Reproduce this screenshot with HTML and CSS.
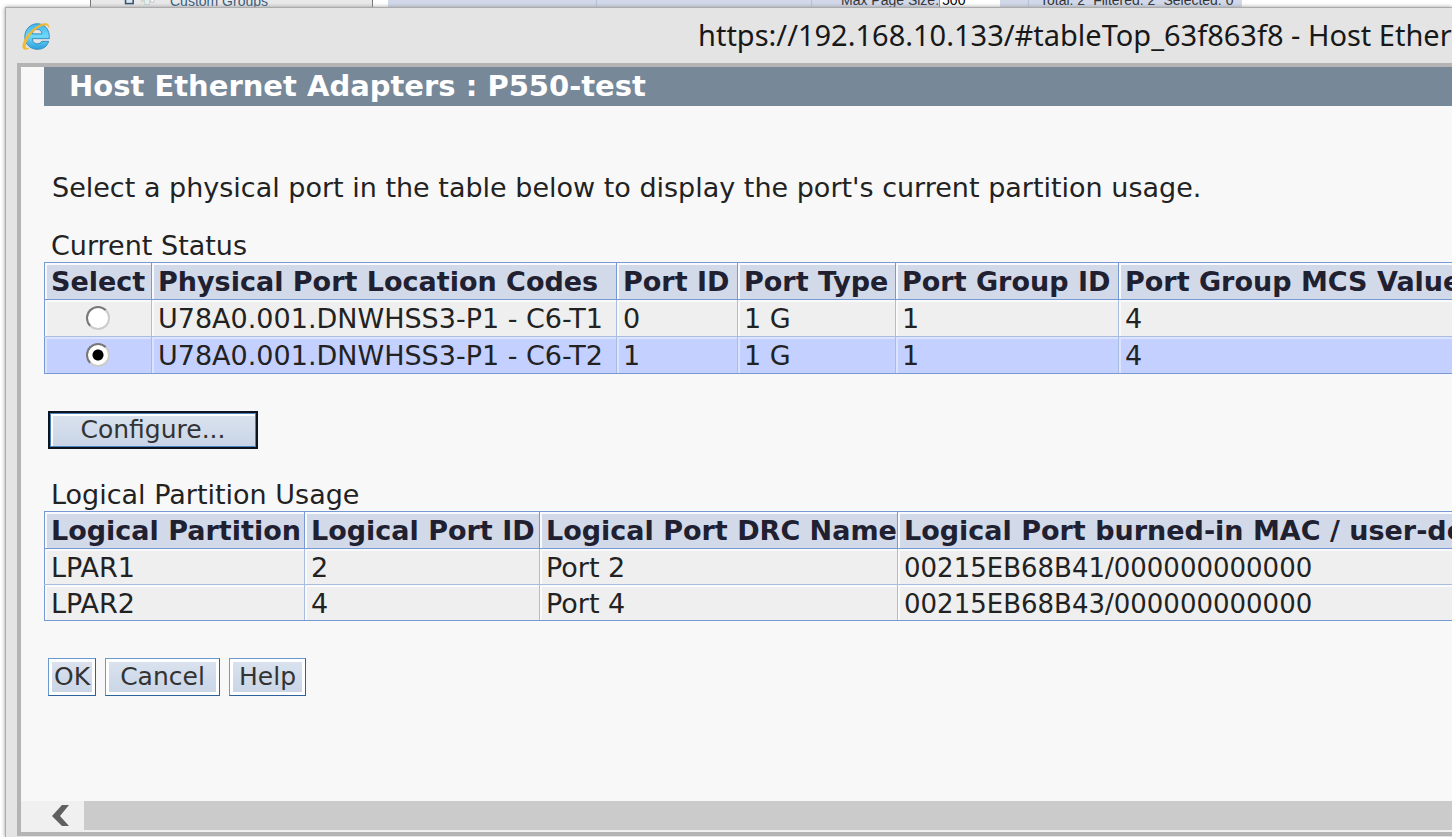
FILE: index.html
```
<!DOCTYPE html>
<html lang="en">
<head>
<meta charset="utf-8">
<title>Host Ethernet Adapters</title>
<link rel="stylesheet" href="styles.css">
</head>
<body>
<div class="backdrop">
  <div class="tree">
    <svg class="tree-icons" width="60" height="16" viewBox="0 0 60 16"><rect x="2" y="3" width="10" height="11" fill="#dce6f0" stroke="#33506e" stroke-width="2"/><rect x="22" y="4" width="4" height="8" fill="#d8d8c8"/><rect x="27" y="2" width="6" height="13" fill="#e6f2e6" stroke="#b8ccd8"/><rect x="35" y="4" width="4" height="8" fill="#fff" stroke="#b8b8c8"/></svg>
    <span>Custom Groups</span>
  </div>
  <div class="toolbar">
    <span class="tool-cell tool-first"></span>
    <span class="tool-cell tool-second"></span>
    <label class="tool-cell tool-size">Max Page Size: <input class="size-input" type="text" value="500"></label>
    <span class="tool-cell tool-totals"><span>Total: 2</span><span>Filtered: 2</span><span>Selected: 0</span></span>
  </div>
</div>
<div class="window">
  <header class="titlebar">
    <svg class="ie" width="32" height="32" viewBox="0 0 30 30">
      <defs><linearGradient id="b" x1="0" y1="0" x2="0" y2="1"><stop offset="0" stop-color="#45b4e8"/><stop offset=".5" stop-color="#6fd8fb"/><stop offset="1" stop-color="#2c9fda"/></linearGradient></defs>
      <path d="M27.500 17.500H11.500c.2 3 2 4.800 4.800 4.800 2 0 3.300-.8 4-2.300h6.600c-1.400 4.800-5.200 7.500-10.600 7.500C9.600 27.500 4.500 22.600 4.500 15.800 4.500 8.900 9.500 3.500 16.300 3.500c7.200 0 11.600 5.400 11.200 14zM11.600 13h9c-.2-2.700-1.900-4.300-4.400-4.300-2.600 0-4.200 1.600-4.600 4.300z" fill="url(#b)" stroke="#2786bb" stroke-width=".8"/>
      <path d="M27 7c.7-4-4-4.800-9.500-1.800C10 9.200 3.800 17 2.700 23.500c-.7 4.200 1.800 5 5.700 3.100C5.500 27 4.600 26 5.200 23 6.500 17 11.500 10.500 17.500 7 22.500 4 26.500 4 27 7z" fill="#f4b92c" stroke="#f4b92c" stroke-width=".6"/>
    </svg>
    <div class="address">https://192.168.10.133/#tableTop_63f863f8 - Host Ethernet Adapters</div>
  </header>
  <div class="client">
    <main class="page">
      <h1 class="heading">Host Ethernet Adapters : P550-test</h1>
      <p class="intro">Select a physical port in the table below to display the port's current partition usage.</p>
      <h2 class="caption" id="status">Current Status</h2>
      <table class="grid ports" aria-labelledby="status">
        <colgroup><col class="w107"><col class="w465"><col class="w121"><col class="w158"><col class="w223"><col class="w465"></colgroup>
        <thead><tr><th>Select</th><th>Physical Port Location Codes</th><th>Port ID</th><th>Port Type</th><th>Port Group ID</th><th>Port Group MCS Value</th></tr></thead>
        <tbody>
          <tr><td class="pick"><input type="radio" name="port" aria-label="Port 0"></td><td>U78A0.001.DNWHSS3-P1 - C6-T1</td><td>0</td><td>1 G</td><td>1</td><td>4</td></tr>
          <tr class="selected"><td class="pick"><input type="radio" name="port" aria-label="Port 1" checked></td><td>U78A0.001.DNWHSS3-P1 - C6-T2</td><td>1</td><td>1 G</td><td>1</td><td>4</td></tr>
        </tbody>
      </table>
      <div class="actions"><button class="btn btn-default" type="button">Configure...</button></div>
      <h2 class="caption" id="usage">Logical Partition Usage</h2>
      <table class="grid usage" aria-labelledby="usage">
        <colgroup><col class="w260"><col class="w235"><col class="w358"><col class="w860"></colgroup>
        <thead><tr><th>Logical Partition</th><th>Logical Port ID</th><th>Logical Port DRC Name</th><th>Logical Port burned-in MAC / user-defined MAC</th></tr></thead>
        <tbody>
          <tr><td>LPAR1</td><td>2</td><td>Port 2</td><td class="mac">00215EB68B41/000000000000</td></tr>
          <tr><td>LPAR2</td><td>4</td><td>Port 4</td><td class="mac">00215EB68B43/000000000000</td></tr>
        </tbody>
      </table>
      <div class="actions"><button class="btn btn-ok" type="button">OK</button><button class="btn btn-cancel" type="button">Cancel</button><button class="btn btn-help" type="button">Help</button></div>
    </main>
    <div class="scrollbar">
      <button class="scroll-left" type="button" aria-label="Scroll left"><svg width="18" height="22" viewBox="0 0 18 22"><path d="M10 0h7L8 11l9 10h-7L0 11z" fill="#606060"/></svg></button>
      <div class="thumb"></div>
    </div>
  </div>
</div>
</body>
</html>
```
FILE: styles.css
```
* { box-sizing: border-box; }
html, body { height: 100%; }
body {
  margin: 0;
  display: flex;
  flex-direction: column;
  overflow: hidden;
  background: #fff;
  color: #222;
  font-family: "DejaVu Sans", Verdana, sans-serif;
  font-size: 27px;
}

/* page behind the window */
.backdrop {
  flex: none;
  display: flex;
  height: 7px;
  padding: 1px 0 0 90px;
  overflow: hidden;
  font: 14px/20px "Liberation Sans", Arial, sans-serif;
}
.tree {
  flex: none;
  display: flex;
  width: 283px;
  height: 20px;
  margin: -10px 15px 0 0;
  padding-left: 33px;
  background: #e8e8e8;
  border: solid #777;
  border-width: 0 1px;
  color: #34597c;
}
.tree-icons { flex: none; width: 46px; }
.toolbar { display: flex; flex: none; height: 20px; margin-top: -11px; background: #d0d8e9; color: #333; }
.tool-cell { flex: none; height: 20px; border-right: 1px solid #b4c4dd; white-space: nowrap; }
.tool-first { width: 209px; }
.tool-second { width: 215px; }
.tool-size { display: flex; width: 217px; padding-left: 29px; }
.size-input { width: 61px; height: 20px; padding: 0 2px; border: 0; border-left: 1px solid #6c9bd2; font: inherit; }
.tool-totals { display: flex; gap: 8px; width: 213px; padding-left: 11px; border: 0; }

/* window frame */
.window {
  flex: 1;
  min-height: 0;
  display: flex;
  flex-direction: column;
  margin-left: 5px;
  background: #e4e4e4;
  border: solid #ababab;
  border-width: 1px 0 0 1px;
  box-shadow: 0 0 4px #999;
}
.titlebar { flex: none; display: flex; align-items: center; height: 55px; padding-left: 14px; }
.ie { flex: none; }
.address {
  margin-left: 646px;
  padding-bottom: 2px;
  white-space: nowrap;
  color: #181818;
  font: 29px/38px "Noto Sans", "Segoe UI", sans-serif;
}
.client {
  flex: 1;
  min-height: 0;
  display: flex;
  flex-direction: column;
  margin: 0 0 1px 11px;
  border: solid #b4b4b4;
  border-width: 4px 0 4px 4px;
  background: #f8f8f8;
}
.page { flex: 1; min-height: 0; padding-left: 23px; overflow: hidden; }

.heading {
  margin: 0;
  padding-left: 25px;
  background: #778899;
  color: #fff;
  font-size: 29px;
  line-height: 39px;
}
.intro { margin: 66px 0 26px 8px; line-height: 32px; white-space: nowrap; }
.caption { margin: 0 0 0 7px; font-size: 27px; font-weight: 400; line-height: 32px; }

.grid {
  table-layout: fixed;
  border-collapse: collapse;
  border: 1px solid #7799d4;
  line-height: 32px;
  white-space: nowrap;
}
.ports { width: 1539px; }
.usage { width: 1713px; }
.grid th, .grid td { height: 36px; padding: 2px 0 0 6px; text-align: left; overflow: hidden; }
.grid th, .ports td { height: 37px; }
.grid th {
  border: 1px solid #7799d4;
  background: #d2d9e9;
  color: #202030;
  box-shadow: inset 2px 2px #f8faff;
}
.grid td {
  border: 1px solid #a9bde0;
  background: #efefef;
  box-shadow: inset 2px 2px #fafafa;
}
.grid .selected td { background: #c4d0ff; box-shadow: inset 2px 2px #dce3ff; }
.grid tbody tr:last-child td { border-bottom-color: #7799d4; }
.grid tbody td:first-child { border-left-color: #7799d4; }
.grid .mac { font-size: 26px; }
.grid .pick { padding: 0; text-align: center; }
.pick input {
  appearance: none;
  display: block;
  width: 24px;
  height: 24px;
  margin: 0 auto;
  border: 2px solid;
  border-color: #777 #ccc #ccc #777;
  border-radius: 50%;
  background: #fff;
}
.pick input:checked { background: radial-gradient(circle, #000 5px, #fff 6px); }

.w107 { width: 107px; }
.w121 { width: 121px; }
.w158 { width: 158px; }
.w223 { width: 223px; }
.w235 { width: 235px; }
.w260 { width: 260px; }
.w358 { width: 358px; }
.w465 { width: 465px; }
.w860 { width: 860px; }

.actions { display: flex; gap: 9px; margin: 37px 0 30px 4px; }
.btn {
  height: 38px;
  padding: 0;
  border: 1px solid;
  border-color: #6a9bcc #2d629c #2d629c #6a9bcc;
  background: linear-gradient(#dbe3ef, #c8d4e6);
  box-shadow: inset 0 0 0 3px #fff;
  color: #333;
  font: 25px/32px "DejaVu Sans", Verdana, sans-serif;
}
.btn-default { width: 210px; border: 2px solid #0c1420; box-shadow: inset 0 0 0 1px #4c83bd, inset 3px 3px #fff; }
.btn-ok { width: 48px; }
.btn-cancel { width: 115px; }
.btn-help { width: 77px; }

.scrollbar { flex: none; display: flex; height: 31px; padding-bottom: 2px; background: #f0f0f0; }
.scroll-left { display: flex; align-items: center; width: 63px; padding: 0 0 0 31px; border: 0; background: #f0f0f0; }
.thumb { flex: 1; background: #cbcbcb; }
```
